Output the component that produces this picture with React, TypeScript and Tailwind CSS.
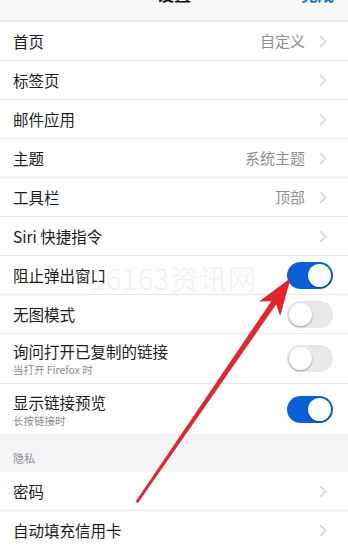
import React from 'react';

type Row = {
  label: string;
  value?: string;
  sub?: string;
  toggle?: boolean;
  chevron?: boolean;
};

const rows: Row[] = [
  { label: '首页', value: '自定义', chevron: true },
  { label: '标签页', chevron: true },
  { label: '邮件应用', chevron: true },
  { label: '主题', value: '系统主题', chevron: true },
  { label: '工具栏', value: '顶部', chevron: true },
  { label: 'Siri 快捷指令', chevron: true },
  { label: '阻止弹出窗口', toggle: true },
  { label: '无图模式', toggle: false },
  { label: '询问打开已复制的链接', sub: '当打开 Firefox 时', toggle: false },
  { label: '显示链接预览', sub: '长按链接时', toggle: true },
];

const privacy: Row[] = [
  { label: '密码', chevron: true },
  { label: '自动填充信用卡', chevron: true },
];

function Chevron() {
  return (
    <svg width="8" height="13" viewBox="0 0 8 13" className="shrink-0">
      <path d="M1.5 1.5 L6.5 6.5 L1.5 11.5" fill="none" stroke="#d4d4d8" strokeWidth="1.6" strokeLinecap="round" strokeLinejoin="round" />
    </svg>
  );
}

function Toggle({ on }: { on: boolean }) {
  return (
    <div
      className={
        on
          ? 'w-[46px] h-[27px] rounded-full bg-[#0b5fd4] flex items-center justify-end px-[2px]'
          : 'w-[46px] h-[27px] rounded-full bg-[#e8e8eb] flex items-center justify-start px-[2px]'
      }
    >
      <div className="w-[23px] h-[23px] rounded-full bg-white shadow-[0_1px_2px_rgba(0,0,0,0.35)]" />
    </div>
  );
}

function SettingRow({ row, last }: { row: Row; last?: boolean }) {
  const tall = !!row.sub;
  return (
    <div
      className={`${tall ? 'h-[50px]' : 'h-[39px]'} ${last ? '' : 'border-b border-[#e8e8ea]'} flex items-center pl-[13px] pr-[15px] bg-white`}
    >
      <div className="flex-1 min-w-0 flex flex-col">
        <span className="text-[15.5px] leading-[20px] text-[#1c1c1e]">{row.label}</span>
        {row.sub && <span className="mt-[2px] text-[10.5px] leading-[13px] text-[#8a8a8e]">{row.sub}</span>}
      </div>
      {row.value && <span className="text-[15px] text-[#8e8e93] mr-[14px]">{row.value}</span>}
      {row.chevron && (
        <div className="mr-[6px]">
          <Chevron />
        </div>
      )}
      {row.toggle !== undefined && <Toggle on={row.toggle} />}
    </div>
  );
}

export default function App() {
  return (
    <div
      className="relative w-[348px] h-[546px] overflow-hidden bg-white"
      style={{ fontFamily: '"Noto Sans CJK SC", "Noto Sans", sans-serif' }}
    >
      <div className="h-[22px] bg-[#f8f8f9] border-b-2 border-[#ececef] overflow-hidden">
        <div className="-mt-[17px] h-[22px] flex items-center px-[13px]">
          <div className="flex-1" />
          <span className="text-[17px] font-semibold text-[#111]">设置</span>
          <div className="flex-1 flex justify-end">
            <span className="text-[16.5px] font-semibold text-[#1f6fd6] mr-[1px]">完成</span>
          </div>
        </div>
      </div>

      {rows.map((r, i) => (
        <SettingRow key={r.label} row={r} last={i === rows.length - 1} />
      ))}

      <div className="h-[38px] bg-[#f4f4f6] flex items-end pl-[13px] pb-[6px]">
        <span className="text-[11px] text-[#8e8e93]">隐私</span>
      </div>

      {privacy.map((r) => (
        <SettingRow key={r.label} row={r} />
      ))}

      {/* watermark */}
      <div className="absolute left-[90px] top-[257px] text-[28px] font-light text-[#edf0f5] tracking-[1px] pointer-events-none">
        16163资讯网
      </div>

      {/* red annotation arrow */}
      <svg className="absolute inset-0 pointer-events-none" width="348" height="546" viewBox="0 0 348 546">
        <polygon
          points="290,279 280.1,314.7 276.3,303.5 137.8,502.6 136.2,501.4 272.1,300.7 260.3,301.1"
          fill="#e3262b"
          stroke="#c81d22"
          strokeWidth="0.8"
          strokeLinejoin="round"
        />
      </svg>
    </div>
  );
}
